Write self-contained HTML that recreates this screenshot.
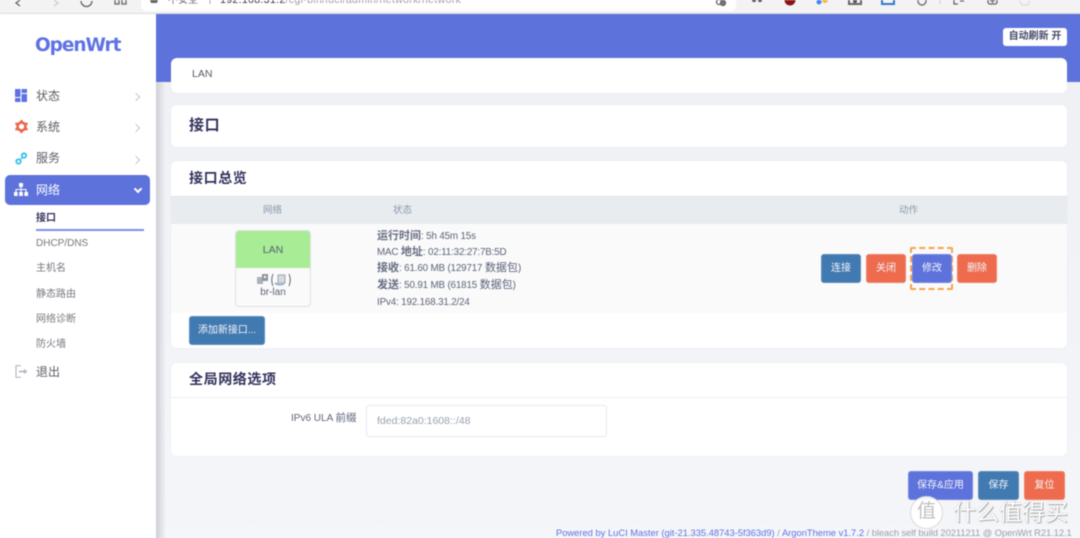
<!DOCTYPE html>
<html lang="zh">
<head>
<meta charset="utf-8">
<title>OpenWrt</title>
<style>
html{margin:0;padding:0;background:#f8f8f8;width:1080px;height:538px;overflow:hidden}
body{margin:0;padding:0;width:1080px;height:538px;overflow:hidden;position:relative}
#w{left:0;top:0;width:1090px;height:548px;overflow:hidden;background:linear-gradient(180deg,#eef0f4,#f5f6f9);font-family:"Liberation Sans","Noto Sans CJK SC",sans-serif;color:#525f7f;filter:blur(.4px)}
div,span,a{position:absolute;white-space:nowrap;box-sizing:border-box}
i{font-style:normal;font-size:11px;letter-spacing:0}
i.b{font-weight:700;color:#666d80}
.card{left:171px;width:896px;background:#fff;border-radius:6px;box-shadow:0 0 2px rgba(136,152,170,.08)}
.side{font-size:10px;line-height:14px;color:#77777f}
.nav{left:36px;font-size:12px;line-height:16px;color:#5c5c66}
.chev{width:6px;height:6px;border-top:1.5px solid #c6cad0;border-right:1.5px solid #c6cad0;transform:rotate(45deg);left:133px}
.btn{color:#f4f5fb;font-size:10px;text-align:center;border-radius:3px;border:1px solid rgba(255,255,255,.15)}
.h3{font-size:14px;font-weight:700;color:#32325d;letter-spacing:.6px}
.st{left:377px;font-size:9.800px;line-height:13px;color:#5d6478;letter-spacing:-.15px}
svg{position:absolute}
</style>
</head>
<body>
<div id="w">
<!-- browser chrome -->
<div style="left:0;top:0;width:1090px;height:14px;background:#f3f3f3;border-bottom:1px solid #dcdcdc"></div>
<div style="left:141px;top:0;width:595px;height:11px;background:#fff;border-radius:0 0 5px 5px"></div>
<svg style="left:0;top:0" width="1080" height="14" viewBox="0 0 1080 14" fill="none" stroke="#666" stroke-width="1.300">
<path d="M20 0 L16 3 L20 6"/>
<path d="M54 0 L58 3 L54 6" stroke="#ccc"/>
<path d="M81 1 A5.500 5.500 0 0 0 92 1"/>
<path d="M115 0 V4 H119 V0 M122 0 V4 H126 V0"/>
<path d="M150 0 H158 L157 3 H151 Z" fill="#666" stroke="none"/>
<path d="M210 0 V4" stroke="#aaa" stroke-width="1"/>
<circle cx="719" cy="2" r="2.500"/><circle cx="723" cy="3" r="2.500" fill="#777"/>
<circle cx="754" cy="0" r="2" fill="#444" stroke="none"/><circle cx="760" cy="0" r="2" fill="#444" stroke="none"/>
<circle cx="790" cy="0" r="5.500" fill="#8a1414" stroke="none"/>
<circle cx="819" cy="2" r="2.500" fill="#4285f4" stroke="none"/><circle cx="825" cy="0" r="3" fill="#f5b642" stroke="none"/>
<path d="M849 0 V4 H861 V0" stroke-width="2"/><circle cx="855" cy="1" r="2" fill="#555" stroke="none"/>
<path d="M882 0 V4 H894 V0" stroke="#3578c8" stroke-width="2"/>
<circle cx="922" cy="1" r="4"/>
<path d="M940 0 V4" stroke="#ccc" stroke-width="1"/>
<path d="M954 0 V4 H958 M960 1 H964"/>
<rect x="988" y="-5" width="9" height="9" rx="2"/><path d="M992.500 -2 V3 M990 0.500 H995"/>
<path d="M1019 0 L1022 5 H1028 L1030 0" stroke="#ddd"/>
</svg>
<div style="left:168px;top:-5px;font-size:10px;line-height:12px;color:#666">不安全</div>
<div style="left:220px;top:-6px;font-size:10.500px;line-height:13px;color:#9a9a9a;letter-spacing:.35px"><span style="position:static;color:#333">192.168.31.2</span>/cgi-bin/luci/admin/network/network</div>

<!-- sidebar -->
<div style="left:0;top:14px;width:156px;height:534px;background:#fff"></div>
<div style="left:156px;top:14px;width:9px;height:534px;background:linear-gradient(90deg,#cfd0d6,#eef0f4)"></div>
<div style="left:35px;top:34px;font-family:'DejaVu Sans','Liberation Sans',sans-serif;font-size:18.500px;line-height:24px;font-weight:700;color:#5e72e4;letter-spacing:-1.05px">OpenWrt</div>

<!-- main header -->
<div style="left:156px;top:14px;width:934px;height:68px;background:#5e72db"></div>
<div style="left:1003px;top:28px;width:64px;height:18px;background:#fff;border-radius:3px;font-size:10px;line-height:18px;text-align:center;color:#444a6a;font-weight:700">自动刷新 开</div>

<!-- nav -->
<svg style="left:15px;top:89px" width="12" height="13" viewBox="0 0 12 13" fill="#5e72e4"><rect x="0" y="0" width="5.500" height="8"/><rect x="6.500" y="0" width="5.500" height="4"/><rect x="0" y="9" width="5.500" height="4"/><rect x="6.500" y="5" width="5.500" height="8"/></svg>
<div class="nav" style="top:88px">状态</div>
<div class="chev" style="top:94px"></div>
<svg style="left:15px;top:120px" width="13" height="13" viewBox="0 0 14 14"><circle cx="7" cy="7" r="4.300" fill="none" stroke="#ec6548" stroke-width="2.800"/><g stroke="#ec6548" stroke-width="2.400"><path d="M7 0V2.500M7 11.500V14M0.500 3.500L2.800 4.700M11.200 9.300L13.500 10.500M0.500 10.500L2.800 9.300M11.200 4.700L13.500 3.500"/></g></svg>
<div class="nav" style="top:119px">系统</div>
<div class="chev" style="top:125px"></div>
<svg style="left:15px;top:152px" width="13" height="13" viewBox="0 0 13 13" fill="none" stroke="#39bfe8" stroke-width="1.800"><circle cx="9" cy="3.500" r="2.200"/><circle cx="3.500" cy="9.500" r="2.200"/><path d="M6 7L7 6"/></svg>
<div class="nav" style="top:150px">服务</div>
<div class="chev" style="top:157px"></div>

<div style="left:5px;top:175px;width:145px;height:30px;background:#5e72db;border-radius:5px"></div>
<svg style="left:14px;top:183px" width="14" height="13" viewBox="0 0 14 13" fill="#fff"><rect x="5" y="0" width="4" height="4"/><rect x="0" y="9" width="3.600" height="4"/><rect x="5.200" y="9" width="3.600" height="4"/><rect x="10.400" y="9" width="3.600" height="4"/><path d="M6.500 4h1v2h5v3h-1V7H7.500v2h-1V7H2.500v2h-1V6h5z"/></svg>
<div class="nav" style="top:182px;color:#fff">网络</div>
<div style="left:135px;top:186px;width:6px;height:6px;border-right:2px solid #fff;border-bottom:2px solid #fff;transform:rotate(45deg)"></div>

<div class="side" style="left:36px;top:212px;color:#32325d;font-weight:700">接口</div>
<div style="left:36px;top:229px;width:108px;height:2px;background:#7f8fe6"></div>
<div class="side" style="left:36px;top:237px">DHCP/DNS</div>
<div class="side" style="left:36px;top:262px">主机名</div>
<div class="side" style="left:36px;top:288px">静态路由</div>
<div class="side" style="left:36px;top:313px">网络诊断</div>
<div class="side" style="left:36px;top:338px">防火墙</div>
<svg style="left:15px;top:365px" width="13" height="13" viewBox="0 0 13 13" fill="none" stroke="#b4bac4" stroke-width="1.200"><path d="M6 .7H1V12.300H6"/><path d="M4 6.500H9" stroke-width="1.800"/><path d="M9 3.800L12.500 6.500L9 9.200Z" fill="#b4bac4" stroke="none"/></svg>
<div class="nav" style="top:364px">退出</div>

<!-- cards -->
<div class="card" style="top:58px;height:35px"></div>
<div style="left:192px;top:68px;font-size:10.500px;line-height:13px;color:#555a66">LAN</div>

<div class="card" style="top:105px;height:42px"></div>
<div class="h3" style="left:189px;top:117px;font-size:15px;line-height:18px">接口</div>

<div class="card" style="top:161px;height:187px;overflow:hidden"></div>
<div class="h3" style="left:189px;top:170px;line-height:17px">接口总览</div>
<div style="left:171px;top:196px;width:896px;height:28px;background:#e9ecef;border-top:1px solid #e0e3e8"></div>
<div style="left:263px;top:205px;font-size:9.500px;line-height:12px;color:#8898aa">网络</div>
<div style="left:393px;top:205px;font-size:9.500px;line-height:12px;color:#8898aa">状态</div>
<div style="left:899px;top:205px;font-size:9.500px;line-height:12px;color:#8898aa">动作</div>
<div style="left:171px;top:224px;width:896px;height:89px;background:#fafafb"></div>

<!-- LAN badge -->
<div style="left:235px;top:230px;width:76px;height:77px;background:#fafafa;border:1px solid #dfe1e5;border-radius:4px;overflow:hidden">
  <div style="left:0;top:1px;width:74px;height:36px;background:#a8ec96;text-align:center;font-size:10.500px;line-height:36px;color:#566070">LAN</div>
  <div style="left:0;top:0;width:74px;height:1px;background:#a8ec96"></div>
  <svg style="left:20px;top:42px" width="36" height="14" viewBox="0 0 36 14"><rect x="1" y="4" width="6" height="7" fill="#a9b0b8"/><rect x="6" y="1" width="6" height="7" fill="#8d95a0"/><rect x="8" y="3" width="2" height="2" fill="#fff"/><path d="M17 1Q14.500 7 17 13M33 1Q35.500 7 33 13" fill="none" stroke="#556" stroke-width=".9"/><rect x="22" y="2" width="7" height="8" fill="#d8dade" stroke="#8d95a0" stroke-width=".8"/><path d="M19 10Q23 13 28 11" stroke="#6b93c8" stroke-width="1.200" fill="none"/></svg>
  <div style="left:0;top:56px;width:74px;text-align:center;font-size:10px;line-height:12px;color:#5d6478">br-lan</div>
</div>

<div class="st" style="top:230px"><i class="b">运行时间</i>: 5h 45m 15s</div>
<div class="st" style="top:246px">MAC <i class="b">地址</i>: 02:11:32:27:7B:5D</div>
<div class="st" style="top:262px"><i class="b">接收</i>: 61.60 MB (129717 <i>数据包</i>)</div>
<div class="st" style="top:279px"><i class="b">发送</i>: 50.91 MB (61815 <i>数据包</i>)</div>
<div class="st" style="top:296px">IPv4: 192.168.31.2/24</div>

<div class="btn" style="left:821px;top:254px;width:40px;height:29px;line-height:27px;background:#4179b1">连接</div>
<div class="btn" style="left:866px;top:254px;width:40px;height:29px;line-height:27px;background:#ee6c4d">关闭</div>
<div style="left:910px;top:247px;width:43px;height:43px;border:2px dashed #f6a54c;border-radius:2px"></div>
<div class="btn" style="left:912px;top:254px;width:40px;height:29px;line-height:27px;background:#5e72db">修改</div>
<div class="btn" style="left:957px;top:254px;width:40px;height:29px;line-height:27px;background:#ee6c4d">删除</div>

<div class="btn" style="left:189px;top:316px;width:76px;height:29px;line-height:28px;background:#4179b1;font-size:10px">添加新接口...</div>

<!-- global -->
<div class="card" style="top:363px;height:93px"></div>
<div class="h3" style="left:189px;top:371px;line-height:17px">全局网络选项</div>
<div style="left:171px;top:397px;width:896px;height:1px;background:#eceef2"></div>
<div style="left:291px;top:412px;font-size:10px;line-height:13px;color:#5d6478">IPv6 ULA <i style="font-size:10.500px">前缀</i></div>
<div style="left:366px;top:405px;width:241px;height:32px;border:1px solid #e6e8ee;border-radius:3px;background:#fff;padding-left:10px;font-size:10.500px;line-height:30px;color:#98a0ae">fded:82a0:1608::/48</div>

<!-- footer buttons -->
<div class="btn" style="left:908px;top:471px;width:65px;height:29px;line-height:27px;background:#5e72db">保存&amp;应用</div>
<div class="btn" style="left:978px;top:471px;width:41px;height:29px;line-height:27px;background:#4179b1">保存</div>
<div class="btn" style="left:1024px;top:471px;width:41px;height:29px;line-height:27px;background:#ee6c4d">复位</div>

<!-- watermark -->
<div style="left:910px;top:496px;width:33px;height:33px;border-radius:50%;background:rgba(255,255,255,.92);border:1px solid #d8d8d8;text-align:center;font-size:19px;line-height:30px;color:#c0c0c0">值</div>
<div style="left:953px;top:498px;font-size:23px;line-height:28px;color:#fff;text-shadow:0 0 1px #999,1px 1px 1px #aaa">什么值得买</div>

<!-- footer text -->
<div style="left:556px;top:527px;font-size:9.350px;line-height:13px;color:#9a9fa8"><span style="position:static;color:#5e72e4">Powered by LuCI Master (git-21.335.48743-5f363d9)</span> / <span style="position:static;color:#5e72e4">ArgonTheme v1.7.2</span> <span style="position:static;letter-spacing:-.05px">/ bleach self build 20211211 @ OpenWrt R21.12.1</span></div>
</div>
</body>
</html>
